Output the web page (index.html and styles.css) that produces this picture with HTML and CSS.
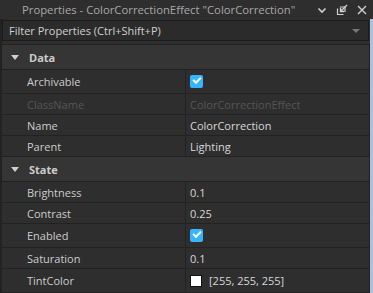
FILE: index.html
```html
<!DOCTYPE html>
<html lang="en">
<head>
    <meta charset="UTF-8">
    <title>Properties</title>
    <link rel="stylesheet" href="styles.css">
</head>
<body>
    <div class="window">
        <header class="titlebar">
            <span class="title">Properties - ColorCorrectionEffect "ColorCorrection"</span>
            <div class="title-icons">
                <svg width="10" height="10" viewBox="0 0 10 10"><path d="M1.5 3.5 L5 7 L8.5 3.5" stroke="#d0d0d0" stroke-width="1.6" fill="none"/></svg>
                <svg width="12" height="12" viewBox="0 0 12 12"><path d="M1.5 4.5 V10.5 H7.5 M4 3 H9 V8" stroke="#d0d0d0" stroke-width="1.2" fill="none"/><path d="M11 1 L4.5 7.5 M4.5 3.8 V7.5 H8.2" stroke="#d0d0d0" stroke-width="1.4" fill="none"/></svg>
                <svg width="10" height="10" viewBox="0 0 10 10"><path d="M1 1 L9 9 M9 1 L1 9" stroke="#d0d0d0" stroke-width="1.4" fill="none"/></svg>
            </div>
        </header>
        <div class="content">
            <div class="filter">
                <span>Filter Properties (Ctrl+Shift+P)</span>
                <span class="filter-arrow"></span>
            </div>
            <div class="grid">
                <div class="section">
                    <span class="caret"></span>Data
                </div>
                <div class="row tall">
                    <div class="name">Archivable</div>
                    <div class="value"><span class="check"></span></div>
                </div>
                <div class="row disabled">
                    <div class="name">ClassName</div>
                    <div class="value">ColorCorrectionEffect</div>
                </div>
                <div class="row">
                    <div class="name">Name</div>
                    <div class="value">ColorCorrection</div>
                </div>
                <div class="row">
                    <div class="name">Parent</div>
                    <div class="value">Lighting</div>
                </div>
                <div class="section">
                    <span class="caret"></span>State
                </div>
                <div class="row">
                    <div class="name">Brightness</div>
                    <div class="value">0.1</div>
                </div>
                <div class="row">
                    <div class="name">Contrast</div>
                    <div class="value">0.25</div>
                </div>
                <div class="row tall">
                    <div class="name">Enabled</div>
                    <div class="value"><span class="check"></span></div>
                </div>
                <div class="row">
                    <div class="name">Saturation</div>
                    <div class="value">0.1</div>
                </div>
                <div class="row tall">
                    <div class="name">TintColor</div>
                    <div class="value"><span class="swatch"></span>[255, 255, 255]</div>
                </div>
            </div>
        </div>
    </div>
</body>
</html>
```

FILE: styles.css
```css
body {
    margin: 0;
    background-color: #2e2e2e;
    font-family: "Open Sans", sans-serif;
    font-size: 11px;
    color: #cccccc;
}

.window {
    width: 373px;
    height: 293px;
    overflow: hidden;
    display: flex;
    flex-direction: column;
}

.titlebar {
    height: 20px;
    display: flex;
    align-items: center;
    background-color: #2e2e2e;
    padding-left: 22px;
    padding-right: 6px;
}

.title {
    flex: 1;
    min-width: 0;
    overflow: hidden;
    color: #a8a8a8;
    font-size: 11.3px;
    white-space: nowrap;
}

.title-icons {
    display: flex;
    align-items: center;
    gap: 9px;
}

.content {
    flex: 1;
    display: flex;
    flex-direction: column;
    border-right: 3px solid #a9c3df;
    border-left: 2px solid #222222;
}

.filter {
    height: 19px;
    margin: 1px 1px 3px 0;
    border: 1px solid #1c1c1c;
    background-color: #2b2b2b;
    display: flex;
    align-items: center;
    justify-content: space-between;
    padding: 0 8px 0 6px;
    color: #d0d0d0;
}

.filter-arrow {
    width: 0;
    height: 0;
    border-left: 4px solid transparent;
    border-right: 4px solid transparent;
    border-top: 4px solid #777777;
}

.grid {
    border-top: 1px solid #222222;
    border-right: 1px solid #222222;
}

.section {
    height: 24px;
    display: flex;
    align-items: center;
    background-color: #353535;
    border-bottom: 1px solid #222222;
    font-weight: bold;
    color: #cccccc;
    padding-left: 9px;
}

.caret {
    width: 0;
    height: 0;
    border-left: 4px solid transparent;
    border-right: 4px solid transparent;
    border-top: 5px solid #d0d0d0;
    margin-right: 10px;
}

.row {
    height: 20px;
    display: flex;
    border-bottom: 1px solid #222222;
}

.row.tall {
    height: 23px;
}

.name {
    width: 158px;
    padding-left: 25px;
    border-right: 1px solid #222222;
    display: flex;
    align-items: center;
}

.value {
    flex: 1;
    padding-left: 4px;
    display: flex;
    align-items: center;
    color: #d8d8d8;
}

.disabled .name,
.disabled .value {
    color: #555555;
}

.check {
    width: 13px;
    height: 13px;
    border-radius: 2px;
    background-color: #35b5ff;
    position: relative;
}

.check::after {
    content: "";
    position: absolute;
    left: 3px;
    top: 2px;
    width: 6px;
    height: 3px;
    border-left: 2px solid #ffffff;
    border-bottom: 2px solid #ffffff;
    transform: rotate(-45deg);
}

.swatch {
    width: 10px;
    height: 10px;
    background-color: #ffffff;
    border: 1px solid #111111;
    margin-right: 7px;
}
```
